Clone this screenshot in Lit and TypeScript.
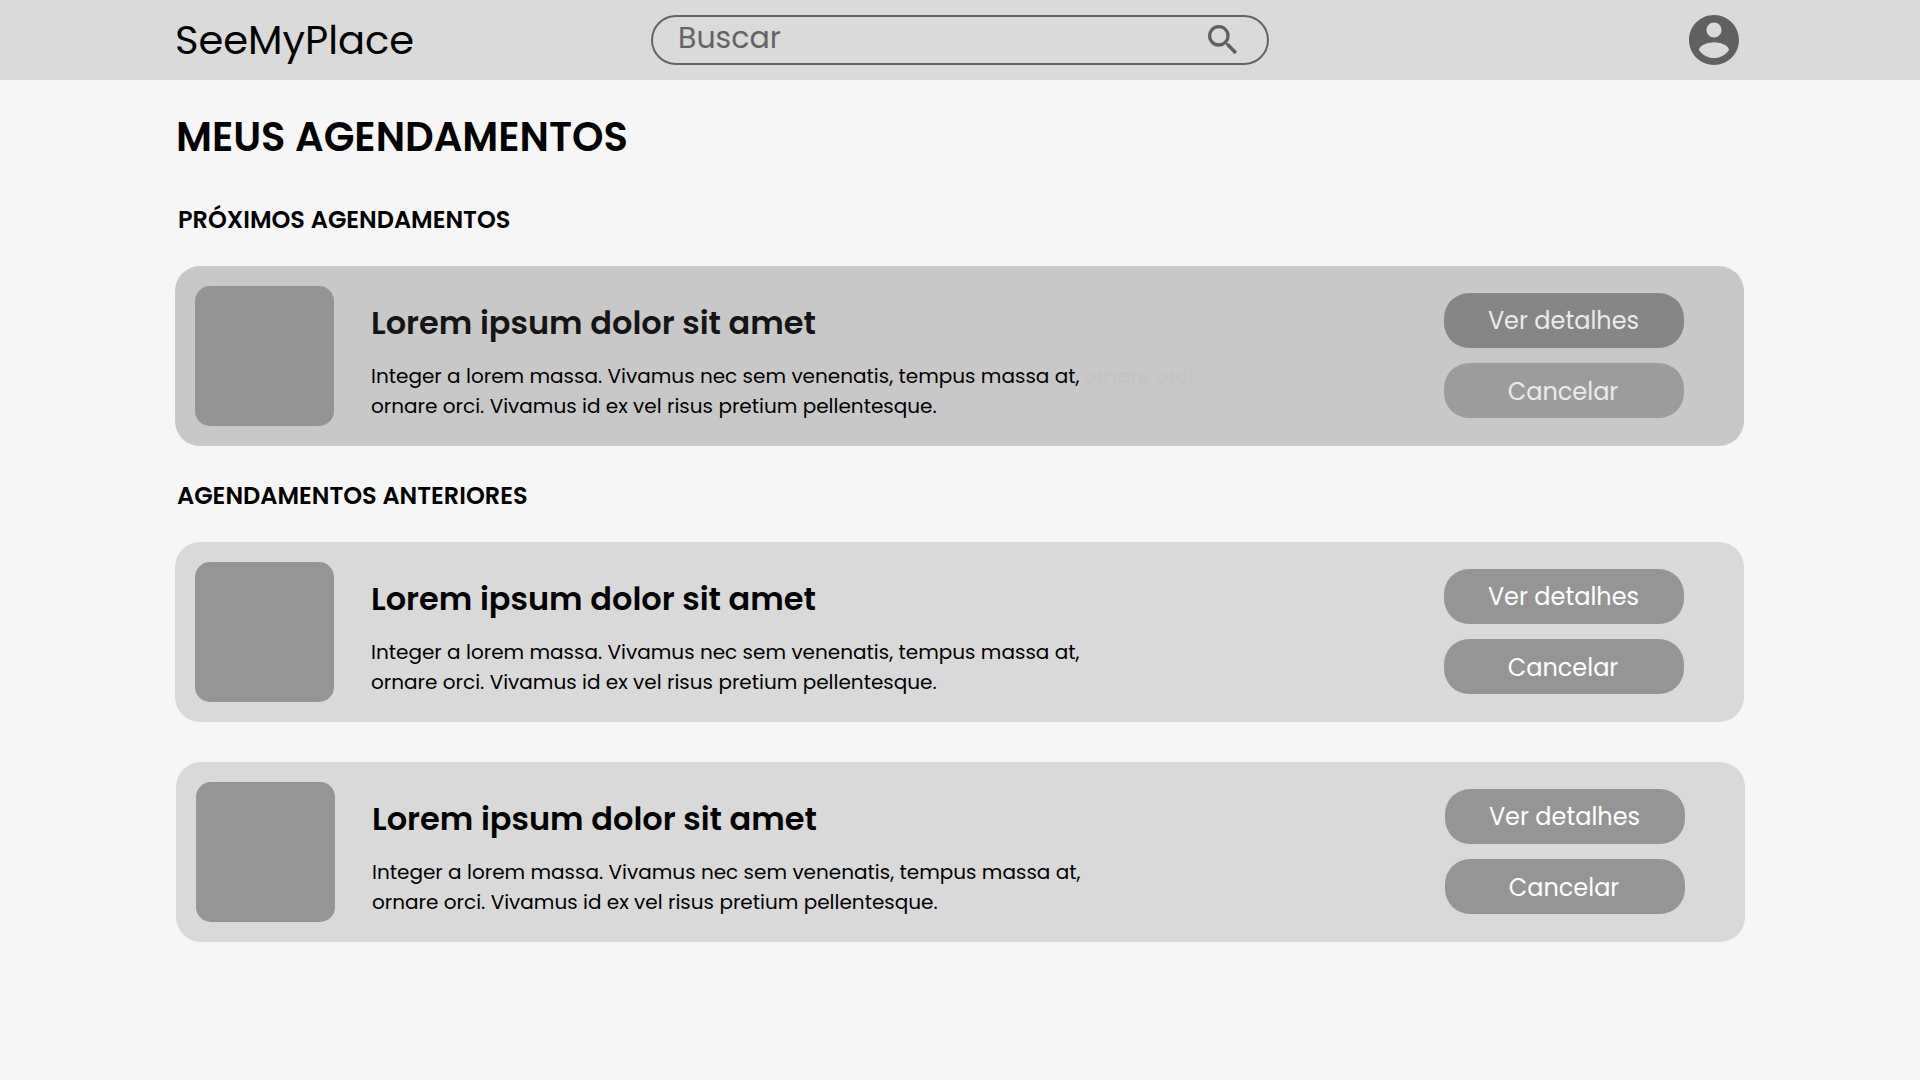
import { LitElement, html, css, nothing } from "lit";

class AppointmentCard extends LitElement {
  static properties = { active: { type: Boolean } };
  declare active: boolean;
  static styles = css`
    :host { display: block; }
    .card {
      box-sizing: border-box; display: flex; width: 1569px; height: 180px;
      padding: 20px 60px 20px 20px; border-radius: 25px; background: #d9d9d9; color: #000;
    }
    .thumb { width: 139px; height: 140px; border-radius: 15px; background: #959595; }
    .body { flex: 1; padding: 13px 0 0 37px; }
    .title { margin: 0 0 14px; font-size: 32px; line-height: 48px; font-weight: 600; white-space: nowrap; }
    .desc { margin: 0; font-size: 20px; line-height: 30px; white-space: nowrap; }
    .line { display: block; width: max-content; }
    .faded { margin-left: -1px; color: #c4c4c4; }
    .actions { display: flex; flex-direction: column; gap: 15px; padding-top: 7px; }
    .btn {
      box-sizing: border-box; width: 240px; height: 55px; padding: 0 1px 0 0; border: 0; border-radius: 25px;
      background: #959595; color: #fff; font: inherit; font-size: 24px; line-height: 55px; text-align: center;
    }
    .cancel { padding: 1px 2px 0 0; }
    .active { background: #c8c8c8; }
    .active .thumb { background: #949494; }
    .active .title { color: #151515; }
    .active .btn { background: #868686; color: #ebebeb; }
    .active .cancel { background: #9c9c9c; }
  `;
  render() {
    return html`
      <article class="card ${this.active ? "active" : ""}">
        <div class="thumb"></div>
        <div class="body">
          <h3 class="title">Lorem ipsum dolor sit amet</h3>
          <p class="desc">
            <span class="line">Integer a lorem massa. Vivamus nec sem venenatis, tempus massa at,${this.active
              ? html` <span class="faded">ornare orci.</span>`
              : nothing}</span>
            <span class="line">ornare orci. Vivamus id ex vel risus pretium pellentesque.</span>
          </p>
        </div>
        <div class="actions">
          <button class="btn">Ver detalhes</button>
          <button class="btn cancel">Cancelar</button>
        </div>
      </article>`;
  }
}
customElements.define("appointment-card", AppointmentCard);

class AppRoot extends LitElement {
  static styles = css`
    :host {
      display: block; width: 1920px; height: 1080px; overflow: hidden; background: #f6f6f6; color: #000;
      font-family: Poppins, Inter, "Open Sans", sans-serif;
    }
    .header {
      box-sizing: border-box; display: grid; grid-template-columns: 476px 618px 1fr; align-items: center;
      height: 80px; padding: 0 176px 0 175px; background: #dadada;
    }
    .logo { font-size: 40px; line-height: 80px; }
    .search {
      box-sizing: border-box; display: flex; align-items: center; justify-content: space-between;
      height: 50px; padding: 0 24px 0 25px; border: 2px solid #646464; border-radius: 25px; color: #646464;
    }
    .placeholder { font-size: 30px; line-height: 40px; padding-bottom: 4px; }
    .search-icon { width: 40px; height: 40px; fill: #606060; }
    .avatar { justify-self: end; width: 60px; height: 60px; fill: #606060; }
    .content { padding: 27px 175px 0; }
    .page-title { margin: 0 0 0 1px; font-size: 40px; line-height: 60px; font-weight: 600; }
    .section { margin: 35px 0 28px 3px; font-size: 24px; line-height: 36px; font-weight: 600; }
    .past { margin: 32px 0 28px 2px; }
    .last { margin: 40px 0 0 1px; }
  `;
  render() {
    return html`
      <header class="header">
        <div class="logo">SeeMyPlace</div>
        <div class="search">
          <span class="placeholder">Buscar</span>
          <svg class="search-icon" viewBox="0 0 24 24"><path d="M15.5 14h-.79l-.28-.27A6.471 6.471 0 0 0 16 9.5 6.5 6.5 0 1 0 9.5 16c1.61 0 3.09-.59 4.23-1.57l.27.28v.79l5 4.99L20.49 19l-4.99-5zm-6 0C7.01 14 5 11.99 5 9.5S7.01 5 9.5 5 14 7.01 14 9.5 11.99 14 9.5 14z"/></svg>
        </div>
        <svg class="avatar" viewBox="0 0 24 24"><path d="M12 2C6.48 2 2 6.48 2 12s4.48 10 10 10 10-4.48 10-10S17.52 2 12 2zm0 3c1.66 0 3 1.34 3 3s-1.34 3-3 3-3-1.34-3-3 1.34-3 3-3zm0 14.2c-2.5 0-4.71-1.28-6-3.22.03-1.99 4-3.08 6-3.08 1.99 0 5.97 1.09 6 3.08-1.29 1.94-3.5 3.22-6 3.22z"/></svg>
      </header>
      <main class="content">
        <h1 class="page-title">MEUS AGENDAMENTOS</h1>
        <h2 class="section">PRÓXIMOS AGENDAMENTOS</h2>
        <appointment-card active></appointment-card>
        <h2 class="section past">AGENDAMENTOS ANTERIORES</h2>
        <appointment-card></appointment-card>
        <appointment-card class="last"></appointment-card>
      </main>`;
  }
}
customElements.define("app-root", AppRoot);
